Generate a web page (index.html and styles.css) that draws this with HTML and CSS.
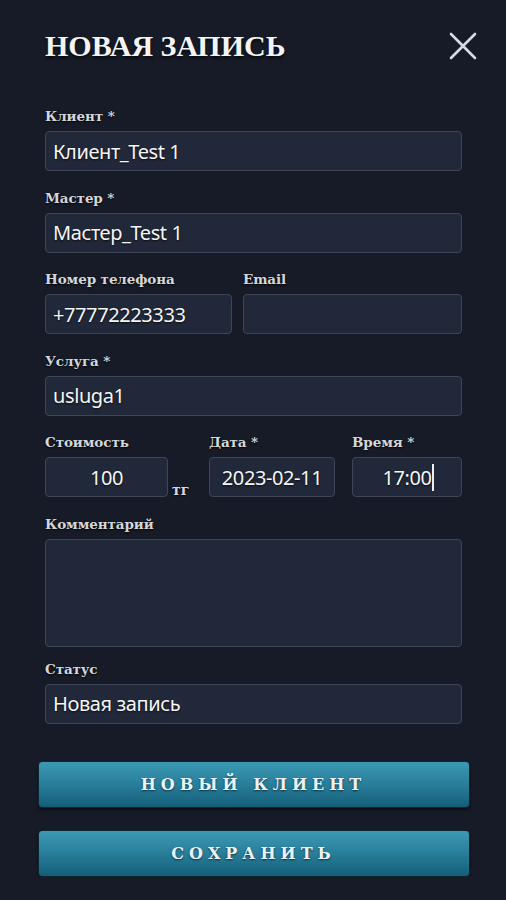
FILE: index.html
```html
<!DOCTYPE html>
<html lang="ru">
<head>
  <meta charset="UTF-8">
  <meta name="viewport" content="width=device-width, initial-scale=1.0">
  <title>Новая запись</title>
  <link rel="stylesheet" href="styles.css">
</head>
<body>
  <div class="sheet">
    <div class="header">
      <h1>НОВАЯ ЗАПИСЬ</h1>
      <button class="close" aria-label="Закрыть">
        <svg width="28" height="28" viewBox="0 0 28 28">
          <path d="M2 2 L26 26 M26 2 L2 26" stroke="#d3dde3" stroke-width="2.6" stroke-linecap="round" fill="none"/>
        </svg>
      </button>
    </div>

    <div class="field">
      <label>Клиент *</label>
      <div class="input">Клиент_Test 1</div>
    </div>

    <div class="field">
      <label>Мастер *</label>
      <div class="input">Мастер_Test 1</div>
    </div>

    <div class="row two">
      <div class="field">
        <label>Номер телефона</label>
        <div class="input">+77772223333</div>
      </div>
      <div class="field">
        <label>Email</label>
        <div class="input"></div>
      </div>
    </div>

    <div class="field">
      <label>Услуга *</label>
      <div class="input">usluga1</div>
    </div>

    <div class="row three">
      <div class="field cost">
        <label>Стоимость</label>
        <div class="input center">100</div>
      </div>
      <span class="unit">тг</span>
      <div class="field date">
        <label>Дата *</label>
        <div class="input center">2023-02-11</div>
      </div>
      <div class="field time">
        <label>Время *</label>
        <div class="input center">17:0<span class="caret">0</span></div>
      </div>
    </div>

    <div class="field comment">
      <label>Комментарий</label>
      <div class="input area"></div>
    </div>

    <div class="field">
      <label>Статус</label>
      <div class="input">Новая запись</div>
    </div>

    <div class="actions">
      <button class="btn">НОВЫЙ КЛИЕНТ</button>
      <button class="btn">СОХРАНИТЬ</button>
    </div>
  </div>
</body>
</html>
```

FILE: styles.css
```css
body {
  margin: 0;
  background: #161b27;
  color: #f2f3f5;
  font-family: "Liberation Serif", serif;
}

.sheet {
  padding: 26px 44px 0 45px;
}

.header {
  display: flex;
  align-items: center;
  justify-content: space-between;
  height: 40px;
  margin-bottom: 42px;
}

h1 {
  margin: 0;
  font-size: 30px;
  font-weight: bold;
  color: #f4f4f4;
  text-shadow: 0 2px 3px rgba(0, 0, 0, 0.8);
}

.close {
  background: none;
  border: none;
  padding: 0;
  margin-right: -15px;
  width: 28px;
  height: 28px;
  display: flex;
  align-items: center;
  justify-content: center;
}

.field {
  margin-bottom: 18.5px;
}

label {
  display: block;
  height: 16px;
  line-height: 16px;
  margin-bottom: 7px;
  font-family: "DejaVu Serif", serif;
  font-size: 13.5px;
  font-weight: bold;
  letter-spacing: -0.1px;
  color: #d4d6da;
  text-shadow: 0 1px 2px rgba(0, 0, 0, 0.9);
}

.input {
  box-sizing: border-box;
  height: 40px;
  padding: 0 7px;
  display: flex;
  align-items: center;
  background: #212839;
  border: 1px solid #3d4556;
  border-radius: 4px;
  font-family: "Noto Sans", sans-serif;
  font-size: 20px;
  letter-spacing: -0.4px;
  color: #f5f5f5;
  text-shadow: 0 1px 2px rgba(0, 0, 0, 0.7);
  white-space: nowrap;
}

.input.center {
  justify-content: center;
  padding: 0;
}

.input.area {
  height: 108px;
}

.comment {
  margin-bottom: 14px;
}

.caret {
  border-right: 2px solid #f0f0f0;
  margin-right: -2px;
}

.row {
  display: flex;
}

.row.two .field:first-child {
  width: 187px;
  margin-right: 11px;
}

.row.two .field:last-child {
  flex: 1;
}

.cost {
  width: 123px;
}

.unit {
  width: 37px;
  padding-left: 4px;
  margin-bottom: 19px;
  align-self: flex-end;
  font-family: "DejaVu Serif", serif;
  font-size: 14px;
  font-weight: bold;
  color: #d4d6da;
  line-height: 14px;
  text-shadow: 0 1px 2px rgba(0, 0, 0, 0.9);
}

.date {
  width: 126px;
  margin-right: 17px;
}

.time {
  flex: 1;
}

.actions {
  margin: 37px -8px 0 -7px;
  display: flex;
  flex-direction: column;
  gap: 22px;
}

.btn {
  height: 47px;
  border: 1px solid #0e2631;
  border-radius: 4px;
  background: linear-gradient(to bottom, #3c99b4 0%, #2a819d 45%, #1b6883 85%, #175c75 100%);
  box-shadow: 0 2px 3px rgba(0, 0, 0, 0.5);
  font-family: "DejaVu Serif", serif;
  font-size: 16px;
  font-weight: bold;
  letter-spacing: 5px;
  padding-left: 5px;
  color: #eaf2f6;
  text-shadow: 0 1px 2px rgba(0, 0, 0, 0.6);
}
```
